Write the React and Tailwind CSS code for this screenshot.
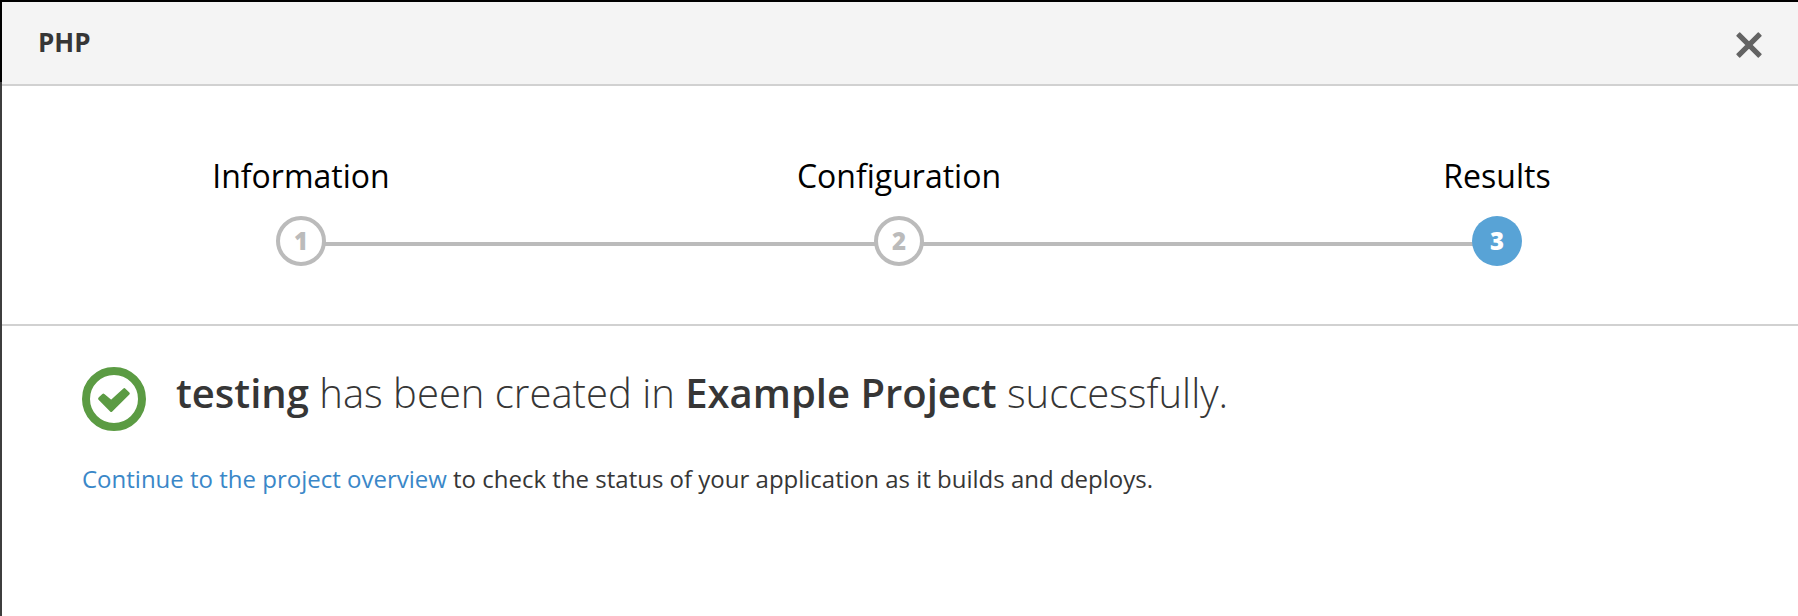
const steps = [
  { number: 1, label: "Information" },
  { number: 2, label: "Configuration" },
  { number: 3, label: "Results", active: true },
];

function CloseIcon() {
  return (
    <svg viewBox="0 0 26 26" className="size-[26px]" fill="currentColor" stroke="currentColor" strokeWidth="1.4" strokeLinejoin="round" aria-hidden="true">
      <path d="M3.7 1 13 10.3 22.3 1 25 3.7 15.7 13 25 22.3 22.3 25 13 15.7 3.7 25 1 22.3 10.3 13 1 3.7Z" />
    </svg>
  );
}

function SuccessIcon() {
  return (
    <svg viewBox="0 0 64 64" className="mt-0.5 size-16 shrink-0 text-[#5b9b43]" aria-hidden="true">
      <circle cx="32" cy="32" r="28" fill="none" stroke="currentColor" strokeWidth="8" />
      <path d="M17.6 31.7 21.4 28.1 29.2 34.7 42.4 22.7 46.3 26.5 29.2 43.5Z" fill="currentColor" stroke="currentColor" strokeWidth="3" strokeLinejoin="round" />
    </svg>
  );
}

function Step({ number, label, active }) {
  return (
    <li className="relative flex flex-1 flex-col items-center" aria-current={active ? "step" : undefined}>
      {number > 1 && <span className="absolute right-1/2 top-[88px] h-1 w-full bg-[#bbbbbb]" />}
      <span className="mb-[18px] text-[32px] leading-[44px] text-black">{label}</span>
      <span
        className={
          active
            ? "relative z-10 flex size-[50px] items-center justify-center rounded-full bg-[#58a3d6] text-2xl font-extrabold text-white"
            : "relative z-10 flex size-[50px] items-center justify-center rounded-full border-4 border-[#bbbbbb] bg-white text-2xl font-extrabold text-[#bbbbbb]"
        }
      >
        {number}
      </span>
    </li>
  );
}

export default function App() {
  return (
    <div className="flex min-h-screen border-t-2 border-black bg-white font-['Open_Sans',sans-serif] text-[#363636]">
      <div className="flex w-0.5 shrink-0 flex-col bg-[#3d3d3d]">
        <div className="h-20 bg-black" />
      </div>
      <main className="min-w-0 flex-1">
        <header className="flex h-[84px] items-start justify-between border-b-2 border-[#d1d1d1] bg-[#f4f4f4] px-9 pt-[22px]">
          <h1 className="text-[26px] font-bold leading-9">PHP</h1>
          <button type="button" aria-label="Close" className="mt-2 text-[#636363]">
            <CloseIcon />
          </button>
        </header>
        <ol className="flex border-b-2 border-[#d1d1d1] pb-[58px] pr-0.5 pt-[68px]">
          {steps.map((step) => (
            <Step key={step.number} {...step} />
          ))}
        </ol>
        <section className="px-20 pt-[39px]">
          <div className="flex items-start gap-[30px]">
            <SuccessIcon />
            <h2 className="text-[40px] font-light leading-[56px]">
              <strong className="font-semibold">testing</strong> has been created in{" "}
              <strong className="font-semibold">Example Project</strong> successfully.
            </h2>
          </div>
          <p className="mt-[30px] text-2xl leading-9">
            <a href="#overview" className="text-[#3a87c8]">Continue to the project overview</a> to check the status of your application as it builds and deploys.
          </p>
        </section>
      </main>
    </div>
  );
}
